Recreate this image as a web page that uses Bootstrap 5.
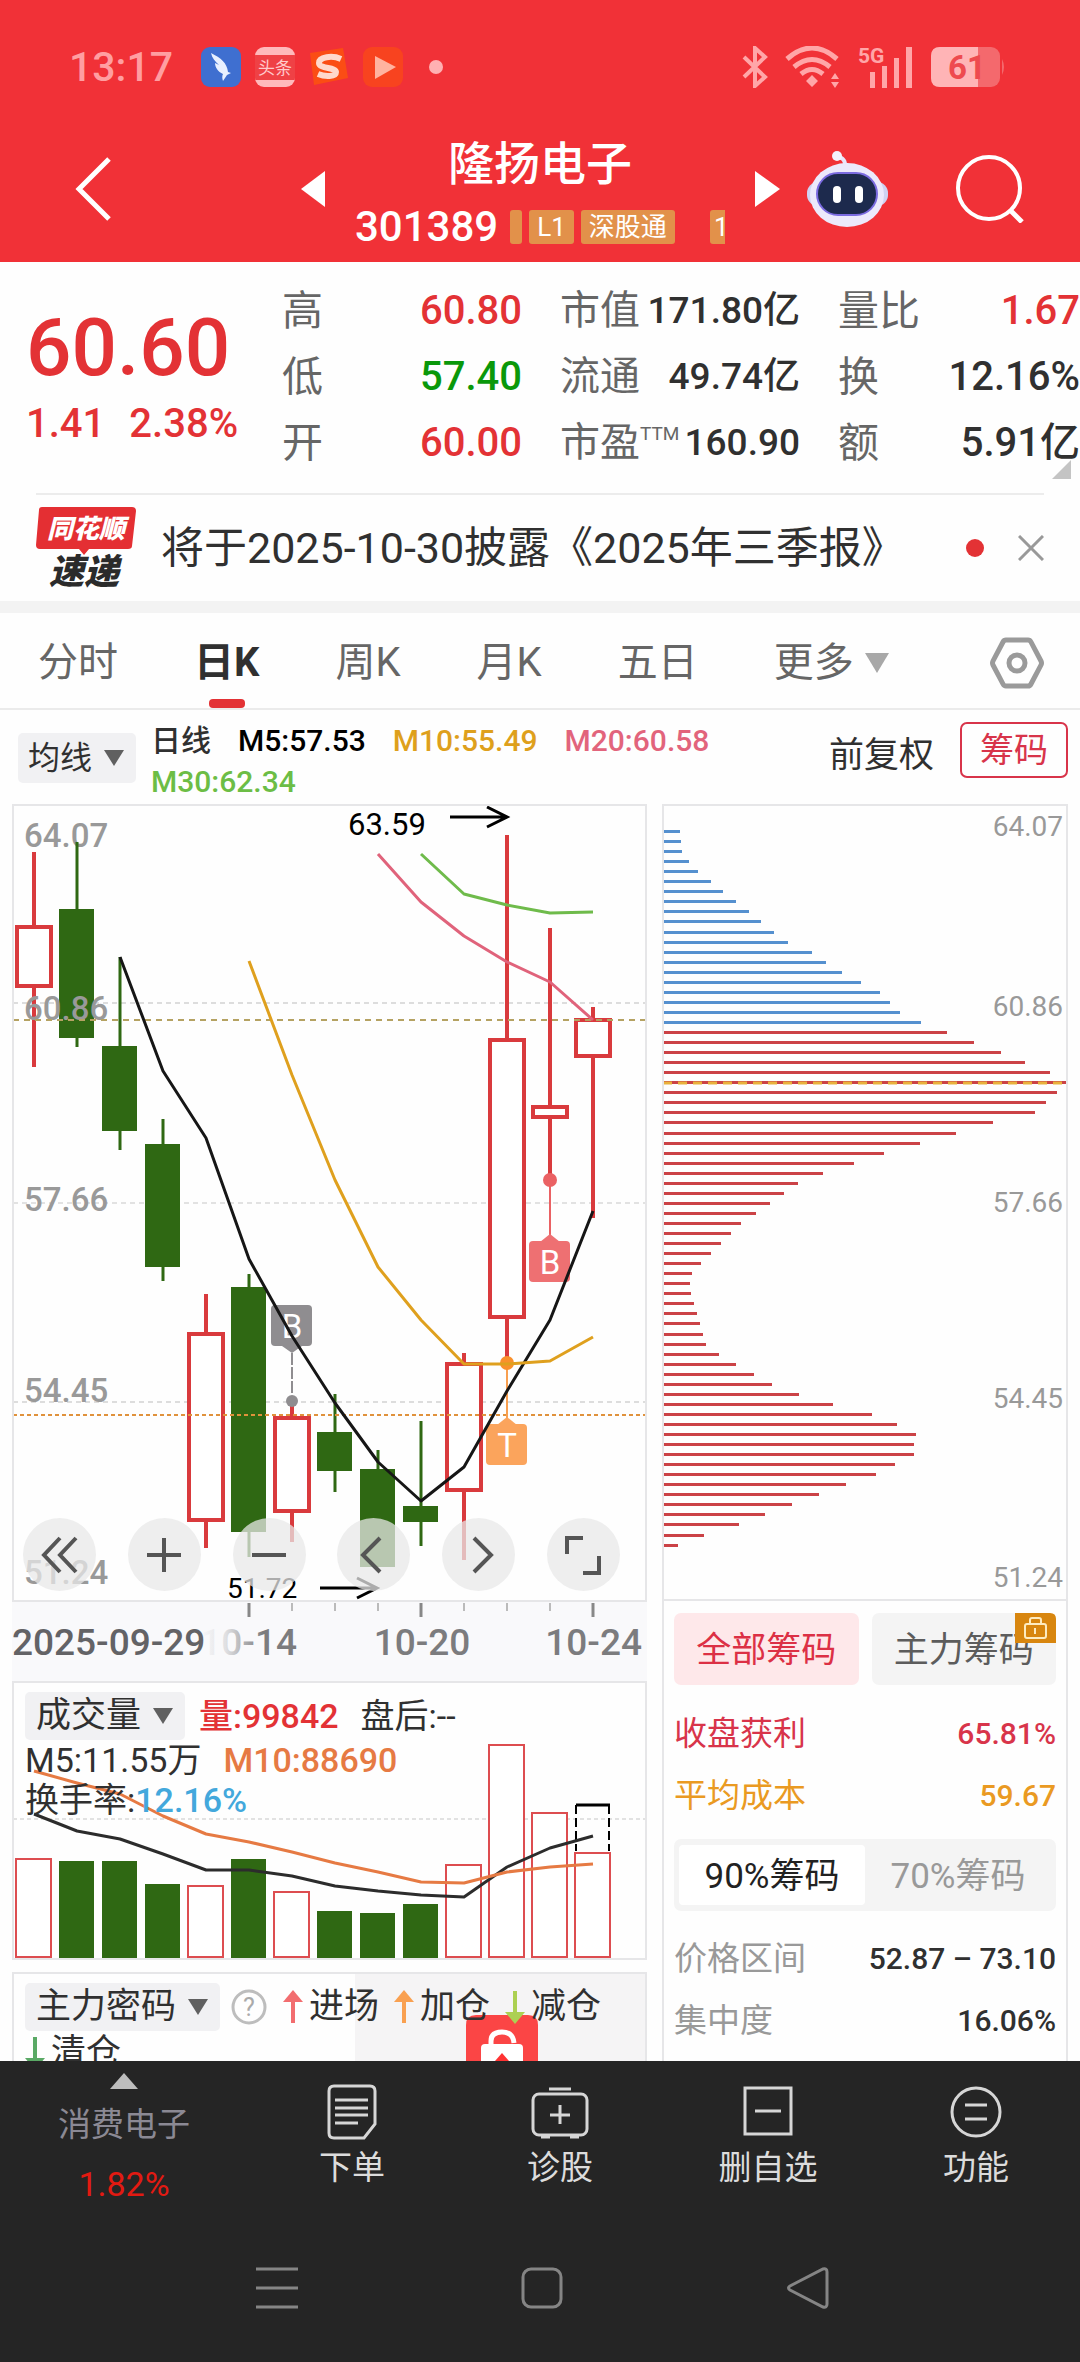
<!DOCTYPE html>
<html lang="zh-CN">
<head>
<meta charset="utf-8">
<meta name="viewport" content="width=device-width, initial-scale=1">
<title>隆扬电子 301389</title>
<link href="https://cdn.jsdelivr.net/npm/bootstrap@5.3.0/dist/css/bootstrap.min.css" rel="stylesheet">
<style>
:root{--up:#e33235;--ink:#303030;--line:#e6e6e8;--dark:#252525}
body{font-family:Roboto,"Noto Sans CJK SC",sans-serif;color:var(--ink);background:#fefefe;font-size:34px;line-height:40px}
svg{display:block;flex:none}
button,a.plain{border:0;background:none;padding:0;color:inherit;text-decoration:none;line-height:inherit}
.fw-5{font-weight:500}
.c-up{color:var(--up)}.c-down{color:#0a980a}.c-gold{color:#dea01c}.c-pink{color:#e2647c}.c-lime{color:#6cbd45}.c-orange{color:#e67a43}.c-sky{color:#43a8dc}
.apphead{background:#f13137;color:#fff}
.statusbar{height:134px;padding:0 74px 0 69px}
.clock{font-size:41px;color:#ff9ea1}
.trayicons{gap:14px;margin-left:28px}
.sysicons{gap:17px}
.appicon{width:40px;height:40px;border-radius:9px;overflow:hidden}
.dotmark{width:14px;height:14px;border-radius:50%;background:#ffb0b2;margin-left:26px}
.titlebar{height:128px;padding:0 56px 0 75px}
.navicon{height:110px;display:flex;align-items:center}
.robotbtn{margin:0 68px 0 27px}
.stockbox{width:370px;margin:0 30px}
.stockname{font-size:46px;line-height:60px}
.stockcode{font-size:42px;line-height:66px;margin-right:12px}
.tagstrip{overflow:hidden;gap:7px}
.tagchip{background:#e2914a;border-radius:3px;font-size:26px;line-height:34px;height:34px;padding:0 8px;white-space:nowrap;flex:none}
.tagcut{width:12px;padding:0}
.tagnext{margin-left:28px;padding:0 4px}
.quote{height:231px;padding:16px 0 0 26px}
.pricebox{flex:0 0 256px}
.bigprice{font-size:80px;line-height:80px;margin-top:30px}
.delta{font-size:40px;line-height:40px;margin-top:16px;gap:24px}
.qgrid{display:grid;align-content:start;grid-template-columns:240fr 240fr 242fr;column-gap:38px;flex:1 1 0;min-width:0}
.qgrid>div{display:flex;justify-content:space-between;line-height:66px;height:66px;white-space:nowrap}
.qgrid .lab{font-size:41px;color:#666}
.qgrid .val{font-size:40px;font-weight:500}
.qgrid .tight .lab{font-size:40px}
.qgrid .tight .val{font-size:37px}
.qgrid sup{font-size:19px;top:-16px}
.corner{position:absolute;right:9px;bottom:14px}
.notice{margin:0 36px;border-top:2px solid #ececec;height:108px}
.noticetext{font-size:43px;margin-left:25px;white-space:nowrap}
.reddot{width:18px;height:18px;border-radius:50%;background:var(--up)}
.closebtn{margin-left:34px}
.bandgap{height:12px;background:#f3f3f3}
.periods{height:97px;padding:0 36px 0 38px;gap:76px;font-size:40px;color:#666;border-bottom:2px solid #ebebeb}
.periods button{height:95px;padding-top:4px;position:relative}
.periods .on{color:var(--ink);font-weight:700}
.periods .on::after{content:"";position:absolute;bottom:0;left:15px;width:36px;height:9px;border-radius:4px;background:var(--up)}
.tri{display:inline-block;border:10px solid transparent;border-top:16px solid #606060;border-bottom:0}
.tri-lg{border-width:20px 12px 0;border-top-color:#a8a8a8;margin-left:11px}
.pickbox{display:inline-flex;align-items:center;background:#f1f1f3;border-radius:5px;padding:0 12px 0 11px;height:48px;gap:11px;font-size:35px;font-weight:400}
.pickbox select{appearance:none;border:0;background:none;padding:0;font:inherit;line-height:48px;color:var(--ink)}
.maline{height:94px;padding:10px 12px 0 18px}
.maline .pickbox{font-size:32px;height:50px;margin-top:13px;padding:0 12px 0 10px}
.mavals{font-size:30px;line-height:41px;column-gap:27px;margin-left:15px;width:570px}
.adj{font-size:35px;line-height:72px}
.chipbtn.chipbtn{border:2px solid #d8344a;color:#d8344a;border-radius:7px;height:56px;padding:0 18px;margin:2px 0 0 26px}
.charts{display:grid;grid-template-columns:635fr 406fr;padding:0 12px;gap:15px}
.leftcol{min-width:0}
.rightcol{min-width:0;border:2px solid var(--line);border-bottom:0}
.panel{border:2px solid var(--line)}
.layers{display:grid}
.layers>*{grid-area:1/1}
.plot{width:100%;height:auto}
.axisband{background:#f9f9fb}
.zoombar{align-self:end;padding:0 25px 9px 9px;display:flex;justify-content:space-between}
.zoombar button{width:73px;height:73px;border-radius:50%;background:rgba(232,232,232,.74);display:flex;align-items:center;justify-content:center}
.zoombar svg{width:40px;height:40px}
.legendrows{padding:9px 11px;line-height:40px;white-space:nowrap}
.legendrows>div{gap:22px}
.legendrows .first{gap:14px;height:48px}
.secret{margin-top:12px;height:89px;overflow:hidden;border-bottom:0}
.greyhalf{background:#f5f4f5;margin-left:54%}
.locktile{width:72px;height:52px;justify-self:start;margin:41px 0 0 71.6%}
.secretrows{padding:9px 11px;line-height:44px;white-space:nowrap;font-size:35px}
.secretline{height:48px}
.arrowmark{width:20px;height:34px;margin-right:6px}
.arrownext{margin-left:15px}
.helpmark{width:36px;height:36px;margin:0 16px 0 11px}
.chipbody{padding:12px 10px 0 10px}
.chiptabs{gap:13px;font-size:35px}
.chiptabs button{flex:1;height:72px;padding-top:3px;border-radius:7px;background:#f4f4f4;color:#5c5c5c;position:relative}
.chiptabs .on{background:#fee8ea;color:#dc3045}
.lockflag{position:absolute;right:0;top:0}
.statrow{display:flex;justify-content:space-between;line-height:62px;font-size:33px}
.statrow dt{font-weight:400}.statrow dd{margin:0;font-size:30px;font-weight:500;color:var(--ink)}
.stats{margin:18px 0 12px}
.stats2{margin:17px 0 0}
.segbox{background:#f4f4f4;border-radius:7px;padding:6px 5px;font-size:35px}
.segbox button{flex:1;height:60px;padding-top:3px;color:#999}
.segbox .on{background:#fff;color:#222;border-radius:4px}
.toned-red dt,.toned-red dd{color:#d8344a}.toned-amber dt,.toned-amber dd{color:#ea9a22}
.toned-grey dt{color:#999}
.botbar{background:var(--dark);color:#dcdcdc;height:302px}
.actions{height:152px}
.botbar a{flex:208 1 0;padding-top:21px;font-size:33px}
.botbar a svg{margin-bottom:8px}
.botbar a.sector{flex:248 1 0;padding-top:12px;color:#8b8994}
.sector .pct{color:#e21a12;margin-top:19px;font-size:34px}
.sector .nm{margin-top:8px}
.sysnav{height:150px;padding-left:5px}
.sysnav button{width:24.72%;display:flex;justify-content:center}
</style>
</head>
<body>
<header class="apphead">
  <div class="statusbar d-flex align-items-center">
    <span class="clock fw-5">13:17</span>
    <div class="trayicons d-flex align-items-center">
      <svg class="appicon" viewBox="0 0 40 40"><rect width="40" height="40" fill="#3f6fd0"/><path d="M10 6c10 5 16 10 17 19l3 1-4 2-4 6c-1-3-1-5 0-7-5-2-8-7-8-11l4 2c-4-4-7-7-8-12z" fill="#e8f0ff"/></svg>
      <svg class="appicon" viewBox="0 0 40 40"><rect width="40" height="40" fill="#ffb9bb"/><rect y="8" width="40" height="25" fill="#ef4145"/><text x="20" y="27" font-size="17" text-anchor="middle" fill="#ffc9cb">头条</text></svg>
      <svg class="appicon" viewBox="0 0 40 40"><path d="M1 6l33-5 5 30-34 7z" fill="#fb4d14"/><path d="M31 9c-9-4-22-2-22 4 0 6 17 4 17 9 0 5-11 5-18 2" transform="translate(1 3)" fill="none" stroke="#ffd9cc" stroke-width="6"/></svg>
      <svg class="appicon" viewBox="0 0 40 40"><rect width="40" height="40" fill="#f8431f"/><path d="M12 9l21 11-21 12z" fill="#ffb39f"/></svg>
    </div>
    <span class="dotmark"></span>
    <div class="sysicons d-flex align-items-center ms-auto">
      <svg width="26" height="42" viewBox="0 0 26 42" fill="none" stroke="#ffa6a8" stroke-width="4"><path d="M2 11l21 20-10 9V2l10 9L2 31"/></svg>
      <svg width="56" height="42" viewBox="0 0 56 42" fill="none" stroke="#ffa6a8" stroke-width="5"><path d="M2 13q25-22 50 0M9 21q18-15 36 0M16 28q11-9 22 0"/><path d="M27 29l6 6-6 6-6-6zM46 33l4-6 4 6zM46 36l4 6 4-6z" fill="#ffa6a8" stroke="none"/></svg>
      <svg width="56" height="44" viewBox="0 0 56 44" fill="#ffa6a8"><text x="0" y="18" font-size="21" font-weight="700">5G</text><path d="M12 27h5v16h-5zM24 21h5v22h-5zM36 13h5v30h-5zM48 2h6v41h-6z"/></svg>
      <svg width="75" height="40" viewBox="0 0 75 40"><rect width="69" height="40" rx="9" fill="#f4696d"/><path d="M9 0H47V40H9Q0 40 0 31V9Q0 0 9 0z" fill="#ffb4b6"/><path d="M71 12q4 8 0 16z" fill="#f4696d"/><text x="36" y="32" font-size="33" font-weight="700" text-anchor="middle" fill="#ee4a4f">61</text></svg>
    </div>
  </div>
  <div class="titlebar d-flex align-items-start">
    <button class="navicon me-auto" aria-label="返回"><svg width="36" height="64" viewBox="0 0 36 64" fill="none" stroke="#fff" stroke-width="5"><path d="M34 2L4 32l30 30"/></svg></button>
    <button class="navicon" aria-label="上一只"><svg width="24" height="36" viewBox="0 0 24 36"><path d="M24 0v36L0 18z" fill="#fff"/></svg></button>
    <div class="stockbox">
      <h1 class="stockname fw-5 text-center m-0">隆扬电子</h1>
      <div class="d-flex align-items-center">
        <span class="stockcode fw-5">301389</span>
        <div class="tagstrip d-flex flex-grow-1"><span class="tagchip tagcut"></span><span class="tagchip">L1</span><span class="tagchip">深股通</span><span class="tagchip tagnext">1</span></div>
      </div>
    </div>
    <button class="navicon" aria-label="下一只"><svg width="25" height="36" viewBox="0 0 25 36"><path d="M0 0v36l25-18z" fill="#fff"/></svg></button>
    <button class="navicon robotbtn" aria-label="智能助手"><svg width="81" height="76" viewBox="0 0 81 76"><path d="M38 14c0-6-3-7-9-9" fill="none" stroke="#e9e6fb" stroke-width="4"/><circle cx="30" cy="5" r="5" fill="#f3f2fd"/><rect x="0" y="31" width="81" height="24" rx="11" fill="#cfd2f2"/><ellipse cx="40" cy="44" rx="37" ry="32" fill="#ece9fb"/><rect x="10" y="22" width="60" height="42" rx="21" fill="#1d2a4d" stroke="#7b6be0" stroke-width="2"/><rect x="26" y="35" width="8" height="17" rx="4" fill="#fff"/><rect x="48" y="35" width="8" height="17" rx="4" fill="#fff"/></svg></button>
    <button class="navicon" aria-label="搜索"><svg width="68" height="68" viewBox="0 0 68 68" fill="none" stroke="#fff" stroke-width="4"><circle cx="33" cy="33" r="31"/><path d="M54 55l12 12" stroke-width="5"/></svg></button>
  </div>
</header>

<section class="quote d-flex position-relative">
  <div class="pricebox c-up fw-5">
    <div class="bigprice">60.60</div>
    <div class="delta d-flex"><span>1.41</span><span>2.38%</span></div>
  </div>
  <div class="qgrid">
    <div><span class="lab">高</span><span class="val c-up">60.80</span></div>
    <div class="tight"><span class="lab">市值</span><span class="val">171.80亿</span></div>
    <div><span class="lab">量比</span><span class="val c-up">1.67</span></div>
    <div><span class="lab">低</span><span class="val c-down">57.40</span></div>
    <div class="tight"><span class="lab">流通</span><span class="val">49.74亿</span></div>
    <div><span class="lab">换</span><span class="val">12.16%</span></div>
    <div><span class="lab">开</span><span class="val c-up">60.00</span></div>
    <div class="tight"><span class="lab">市盈<sup>TTM</sup></span><span class="val">160.90</span></div>
    <div><span class="lab">额</span><span class="val">5.91亿</span></div>
  </div>
  <svg class="corner" width="19" height="19" viewBox="0 0 19 19"><path d="M19 0v19H0z" fill="#c4c4c4"/></svg>
</section>

<section class="notice d-flex align-items-center">
  <svg width="100" height="82" viewBox="0 0 100 82"><path d="M6 0h90q4 0 4 4l-4 35q0 3-4 3H53l-5 6-5-6H4q-4 0-4-4L3 3q0-3 3-3z" fill="#e42f33"/><text x="50" y="31" font-size="26" font-weight="900" font-style="italic" text-anchor="middle" fill="#fff">同花顺</text><text x="48" y="77" font-size="35" font-weight="900" font-style="italic" text-anchor="middle" fill="#2b2b2b">速递</text></svg>
  <span class="noticetext">将于2025-10-30披露《2025年三季报》</span>
  <span class="reddot ms-auto"></span>
  <button class="closebtn" aria-label="关闭"><svg width="26" height="26" viewBox="0 0 26 26" stroke="#999" stroke-width="3"><path d="M1 1l24 24M25 1L1 25"/></svg></button>
</section>
<div class="bandgap"></div>

<nav class="periods d-flex align-items-center">
  <button>分时</button><button class="on">日K</button><button>周K</button><button>月K</button><button>五日</button>
  <button class="d-flex align-items-center">更多<span class="tri tri-lg"></span></button>
  <button class="ms-auto" aria-label="设置"><svg width="54" height="52" viewBox="0 0 54 52" fill="none" stroke="#9a9a9a" stroke-width="5"><path d="M16 3h22q2 0 3 2l10 19q1 2 0 4L41 47q-1 2-3 2H16q-2 0-3-2L3 28q-1-2 0-4L13 5q1-2 3-2z"/><circle cx="27" cy="26" r="8"/></svg></button>
</nav>

<div class="maline d-flex align-items-start">
  <label class="pickbox"><select aria-label="指标"><option>均线</option></select><span class="tri"></span></label>
  <div class="mavals fw-5 d-flex flex-wrap"><span>日线</span><span class="text-black">M5:57.53</span><span class="c-gold">M10:55.49</span><span class="c-pink">M20:60.58</span><span class="c-lime">M30:62.34</span></div>
  <span class="adj ms-auto">前复权</span>
  <button class="chipbtn">筹码</button>
</div>

<main class="charts">
  <div class="leftcol">
    <div class="panel layers">
      <svg class="plot" viewBox="14 806 631 794" id="kline" role="img" aria-label="日K线"></svg>
      <div class="zoombar">
        <button aria-label="最早"><svg viewBox="0 0 40 40" fill="none" stroke="#555" stroke-width="4"><path d="M20 3L4 20l16 17M36 3L20 20l16 17"/></svg></button>
        <button aria-label="放大"><svg viewBox="0 0 40 40" fill="none" stroke="#555" stroke-width="4"><path d="M20 3v34M3 20h34"/></svg></button>
        <button aria-label="缩小"><svg viewBox="0 0 40 40" fill="none" stroke="#555" stroke-width="4"><path d="M3 20h34"/></svg></button>
        <button aria-label="左移"><svg viewBox="0 0 40 40" fill="none" stroke="#555" stroke-width="4"><path d="M26 3L9 20l17 17"/></svg></button>
        <button aria-label="右移"><svg viewBox="0 0 40 40" fill="none" stroke="#555" stroke-width="4"><path d="M15 3l17 17-17 17"/></svg></button>
        <button aria-label="全屏"><svg viewBox="0 0 40 40" fill="none" stroke="#555" stroke-width="4"><path d="M4 19V3h16M36 21v17H20"/></svg></button>
      </div>
    </div>
    <svg class="plot axisband" viewBox="12 1602 635 79" id="axis"></svg>
    <div class="panel layers">
      <svg class="plot" viewBox="14 1683 631 275" id="volume" role="img" aria-label="成交量"></svg>
      <div class="legendrows">
        <div class="first d-flex align-items-center"><label class="pickbox"><select aria-label="副图指标"><option>成交量</option></select><span class="tri"></span></label><span class="c-up fw-5">量:99842</span><span class="ms-2">盘后:--</span></div>
        <div class="d-flex"><span>M5:11.55万</span><span class="c-orange fw-5">M10:88690</span></div>
        <div class="d-flex"><span>换手率:<span class="c-sky fw-5">12.16%</span></span></div>
      </div>
    </div>
    <div class="panel layers secret">
      <div class="greyhalf"></div>
      <svg class="locktile" viewBox="0 0 72 52"><path d="M10 0h52q10 0 10 10v42H0V10Q0 0 10 0z" fill="#fb4545"/><path d="M25 32v-6q0-9 11-9t12 11" fill="none" stroke="#fff" stroke-width="5"/><rect x="15" y="29" width="42" height="28" rx="4" fill="#fff"/><path d="M36 38l-7 8h14z" fill="#f33"/></svg>
      <div class="secretrows">
        <div class="secretline d-flex align-items-center">
          <label class="pickbox"><select aria-label="主力指标"><option>主力密码</option></select><span class="tri"></span></label>
          <svg class="helpmark" viewBox="0 0 36 36"><circle cx="18" cy="18" r="16" fill="none" stroke="#bdbdbd" stroke-width="3"/><text x="18" y="27" text-anchor="middle" font-size="25" fill="#aaa">?</text></svg>
          <svg class="arrowmark" viewBox="0 0 20 34"><path d="M10 33V8" stroke="#f26d6f" stroke-width="4"/><path d="M10 0l10 12H0z" fill="#f26d6f"/></svg><span>进场</span>
          <svg class="arrowmark arrownext" viewBox="0 0 20 34"><path d="M10 33V8" stroke="#f9a050" stroke-width="4"/><path d="M10 0l10 12H0z" fill="#f9a050"/></svg><span>加仓</span>
          <svg class="arrowmark arrownext" viewBox="0 0 20 34"><path d="M10 1v25" stroke="#acd052" stroke-width="4"/><path d="M10 34l10-12H0z" fill="#acd052"/></svg><span>减仓</span>
        </div>
        <div class="d-flex align-items-center"><svg class="arrowmark" viewBox="0 0 20 34"><path d="M10 1v25" stroke="#5aa965" stroke-width="4"/><path d="M10 34l10-12H0z" fill="#5aa965"/></svg><span>清仓</span></div>
      </div>
    </div>
  </div>

  <aside class="rightcol">
    <svg class="plot" viewBox="664 806 402 795" id="chips" role="img" aria-label="筹码分布"></svg>
    <div class="chipbody">
      <div class="chiptabs d-flex">
        <button class="on">全部筹码</button>
        <button>主力筹码<svg class="lockflag" width="41" height="30" viewBox="0 0 41 30"><path d="M0 0h35q6 0 6 6v24H0z" fill="#d8860f"/><rect x="10" y="11" width="21" height="14" rx="2" fill="none" stroke="#fdebc0" stroke-width="2"/><path d="M15 11V7q0-2 2-2h7q2 0 2 2v4M20 15v6" fill="none" stroke="#fdebc0" stroke-width="2"/></svg></button>
      </div>
      <dl class="stats">
        <div class="statrow toned-red"><dt>收盘获利</dt><dd>65.81%</dd></div>
        <div class="statrow toned-amber"><dt>平均成本</dt><dd>59.67</dd></div>
      </dl>
      <div class="segbox d-flex"><button class="on">90%筹码</button><button>70%筹码</button></div>
      <dl class="stats2">
        <div class="statrow toned-grey"><dt>价格区间</dt><dd>52.87 – 73.10</dd></div>
        <div class="statrow toned-grey"><dt>集中度</dt><dd>16.06%</dd></div>
      </dl>
    </div>
  </aside>
</main>

<footer class="botbar">
  <div class="actions d-flex">
    <a href="#" class="plain sector d-flex flex-column align-items-center"><svg width="28" height="16" viewBox="0 0 28 16"><path d="M14 0l14 16H0z" fill="#bdbdbd"/></svg><span class="nm">消费电子</span><span class="pct">1.82%</span></a>
    <a href="#" class="plain d-flex flex-column align-items-center"><svg width="50" height="58" viewBox="0 0 50 58" fill="none" stroke="#d6d6d6" stroke-width="3"><path d="M7 4h36q5 0 5 5v33L37 56H7q-5 0-5-5V9q0-5 5-5zM8 18h33M8 26h33M8 33h33M8 41h23"/></svg>下单</a>
    <a href="#" class="plain d-flex flex-column align-items-center"><svg width="58" height="58" viewBox="0 0 58 58" fill="none" stroke="#d6d6d6" stroke-width="3"><rect x="2" y="12" width="54" height="41" rx="6"/><path d="M18 7h22M29 23v19M19 33h20M10 55h9M39 55h9"/></svg>诊股</a>
    <a href="#" class="plain d-flex flex-column align-items-center"><svg width="50" height="58" viewBox="0 0 50 58" fill="none" stroke="#d6d6d6" stroke-width="3"><rect x="2" y="6" width="46" height="46"/><path d="M12 29h26"/></svg>删自选</a>
    <a href="#" class="plain d-flex flex-column align-items-center"><svg width="52" height="58" viewBox="0 0 52 58" fill="none" stroke="#d6d6d6" stroke-width="3"><circle cx="26" cy="30" r="24"/><path d="M15 23h22M15 37h22"/></svg>功能</a>
  </div>
  <div class="sysnav d-flex justify-content-center align-items-center">
    <button aria-label="菜单"><svg width="42" height="42" viewBox="0 0 42 42" stroke="#858585" stroke-width="3"><path d="M0 2h42M0 21h42M0 40h42"/></svg></button>
    <button aria-label="主屏"><svg width="42" height="42" viewBox="0 0 42 42" fill="none" stroke="#858585" stroke-width="3"><rect x="2" y="2" width="38" height="38" rx="8"/></svg></button>
    <button aria-label="后退"><svg width="42" height="42" viewBox="0 0 42 42" fill="none" stroke="#858585" stroke-width="3"><path d="M36 2q4-1 4 3v32q0 4-4 3L3 23q-3-2 0-4z"/></svg></button>
  </div>
</footer>

<script>
const X=i=>34+43*i, RED='#d93a3d', GREEN='#2f6813';
const line=(pts,c,w=3)=>`<polyline points="${pts.map(p=>p.join()).join(' ')}" fill="none" stroke="${c}" stroke-width="${w}" stroke-linejoin="round"/>`;
const seq=(start,ys)=>ys.map((y,k)=>[X(start+k),y]);
const dash=(y,c,d,w=2)=>`<path d="M13 ${y}H646" stroke="${c}" stroke-width="${w}" stroke-dasharray="${d}"/>`;
const text=(x,y,s,size,c,extra='')=>`<text x="${x}" y="${y}" font-size="${size}" fill="${c}" ${extra}>${s}</text>`;

/* up?, high, body top, body bottom, low */
const candles=[[1,852,925,988,1067],[0,842,909,1038,1047],[0,957,1046,1131,1150],[0,1119,1144,1267,1281],[1,1294,1332,1522,1548],[0,1274,1287,1532,1557],[1,1402,1416,1513,1542],[0,1394,1432,1471,1492],[0,1450,1469,1567,1567],[0,1421,1506,1522,1546],[1,1353,1362,1492,1560],[1,835,1038,1319,1363],[1,928,1105,1119,1180],[1,1007,1018,1058,1218]];
let k=dash(1003,'#ddd','5 4')+dash(1203,'#e2e2e2','5 4')+dash(1402,'#ddd','5 4');
[['64.07',847],['57.66',1211],['54.45',1402],['51.24',1584]].forEach(a=>k+=text(24,a[1],a[0],33,'#999','font-weight="500"'));
candles.forEach((c,i)=>{const x=X(i);
  if(c[0]) k+=`<path d="M${x} ${c[1]}V${c[2]}M${x} ${c[3]}V${c[4]}" stroke="${RED}" stroke-width="4"/><rect x="${x-17}" y="${c[2]+2}" width="34" height="${c[3]-c[2]-4}" fill="#fff" stroke="${RED}" stroke-width="4"/>`;
  else k+=`<path d="M${x} ${c[1]}V${c[4]}" stroke="${GREEN}" stroke-width="3"/><rect x="${x-18}" y="${c[2]}" width="35" height="${c[3]-c[2]}" fill="${GREEN}"/>`;});
k+=text(24,1020,'60.86',33,'#999','font-weight="500"')+dash(1020,'#b5a262','6 5')+dash(1415,'#e0923c','4 3');
k+=`<circle cx="292" cy="1401" r="6" fill="#8f8d90"/><path d="M292 1353V1395" stroke="#8f8d90" stroke-width="2" stroke-dasharray="12 2"/><path d="M282 1346h20l-10 7z" fill="#8f8d90"/><rect x="271" y="1305" width="41" height="41" rx="4" fill="#8f8d90"/>`+text(292,1338,'B',33,'#fff','text-anchor="middle"');
k+=`<path d="M550 1180V1240" stroke="#ea6163" stroke-width="2"/><circle cx="550" cy="1180" r="7" fill="#ea6163"/><path d="M540 1242h20l-10-8z" fill="#ee7072"/><rect x="529" y="1241" width="41" height="41" rx="4" fill="#ee7072"/>`+text(550,1274,'B',33,'#fff','text-anchor="middle"');
k+=`<path d="M507 1363V1425" stroke="#f9a050" stroke-width="2"/><circle cx="507" cy="1363" r="7" fill="#f9902c"/><path d="M497 1425h20l-10-8z" fill="#fba45c"/><rect x="486" y="1424" width="41" height="41" rx="4" fill="#fba45c"/>`+text(507,1457,'T',33,'#fff','text-anchor="middle"');
k+=line(seq(2,[957,1071,1138,1259,1336,1403,1462,1501,1467,1391,1320,1211]),'#161616');
k+=line(seq(5,[961,1075,1180,1267,1320,1364,1364,1361,1337]),'#dfa01e');
k+=line(seq(8,[854,902,936,962,982,1020]),'#e0637b')+line(seq(9,[854,894,905,913,912]),'#6fbb4b');
k+=text(348,835,'63.59',31,'#000')+text(227,1598,'51.72',28,'#000');
k+=`<path d="M450 817H506M487 807l20 10-20 10M320 1588H376M357 1578l20 10-20 10" fill="none" stroke="#000" stroke-width="3"/>`;
kline.innerHTML=k;

let a='';
for(let i=5;i<14;i++){const major=[5,9,13].includes(i);a+=`<path d="M${X(i)} 1603v${major?14:8}" stroke="${major?'#888':'#bbb'}" stroke-width="${major?3:2}"/>`;}
a+='<defs><linearGradient id="fade"><stop offset="0" stop-color="#f9f9fb"/><stop offset=".4" stop-color="#f9f9fb" stop-opacity=".8"/><stop offset="1" stop-color="#f9f9fb" stop-opacity="0"/></linearGradient></defs>';
a+=text(297,1655,'10-14',37,'#7c7c7e','text-anchor="end" font-weight="500"')+'<rect x="201" y="1625" width="62" height="34" fill="url(#fade)"/>';
a+=text(12,1655,'2025-09-29',37,'#636366','font-weight="500"')+text(422,1655,'10-20',37,'#7c7c7e','text-anchor="middle" font-weight="500"')+text(642,1655,'10-24',37,'#7c7c7e','text-anchor="end" font-weight="500"');
axis.innerHTML=a;

const vols=[1858,1861,1861,1884,1885,1859,1891,1911,1913,1904,1864,1744,1812,1852];
let v=dash(1819,'#e2e2e2','4 3');
vols.forEach((y,i)=>{const x=X(i);v+=candles[i][0]?`<rect x="${x-18}" y="${y+1}" width="35" height="${1956-y}" fill="#fff" stroke="#dd4d50" stroke-width="2"/>`:`<rect x="${x-18}" y="${y}" width="35" height="${1958-y}" fill="${GREEN}"/>`;});
v+='<path d="M576 1805H610" stroke="#000" stroke-width="3"/><path d="M576 1805V1851M609 1805V1851" stroke="#000" stroke-width="2" stroke-dasharray="9 4"/>';
v+=line(seq(0,[1814,1831,1839,1854,1870,1870,1876,1886,1891,1895,1897,1867,1848,1836]),'#2c2c2c')+line(seq(0,[1771,1783,1794,1816,1834,1842,1852,1863,1872,1882,1883,1872,1867,1864]),'#e67a43');
volume.innerHTML=v;

const ends=[120,123,126,146,174,212,249,288,327,363,402,443,516,558,606,663,720,750,780,843,922,1002,1083,1155,1229,1281,1250,1218,1185,1058,948,840,732,642,550,473,432,390,348,302,272,242,212,183,155,149,153,161,170,179,188,197,237,288,342,395,477,579,695,771,828,822,822,765,708,618,537,456,375,297,191,114];
let c=ends.map((e,i)=>`<rect x="663" y="${Math.round(830+i*10.05)}" width="${Math.round((e-69)/3)}" height="3" fill="${i<20?'#5590cf':'#cb4246'}"/>`).join('');
c+='<path d="M663 1083H1066" stroke="#e8b23c" stroke-width="3" stroke-dasharray="9 6"/>';
[['64.07',836],['60.86',1016],['57.66',1212],['54.45',1408],['51.24',1587]].forEach(t=>c+=text(1063,t[1],t[0],28,'#999','text-anchor="end"'));
c+='<path d="M662 1600H1067" stroke="#e6e6e8" stroke-width="2"/>';
chips.innerHTML=c;
</script>
<script src="https://cdn.jsdelivr.net/npm/bootstrap@5.3.0/dist/js/bootstrap.bundle.min.js"></script>
</body>
</html>
